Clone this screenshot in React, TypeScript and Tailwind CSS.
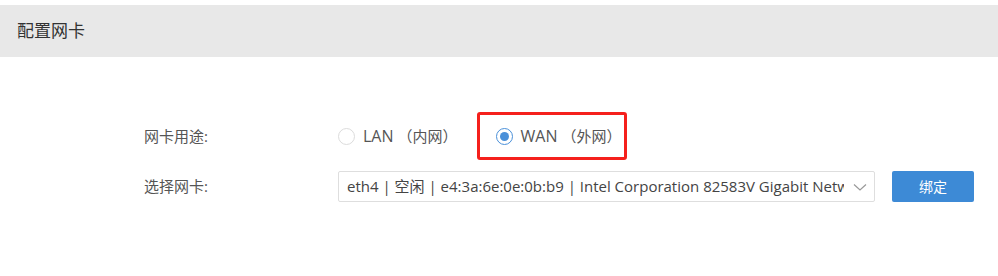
import React, { useState } from 'react';

const font = { fontFamily: '"Open Sans", "Noto Sans CJK SC", sans-serif' };

const Radio: React.FC<{ checked: boolean; label: string; sub: string; onClick: () => void }> = ({
  checked,
  label,
  sub,
  onClick,
}) => (
  <button type="button" onClick={onClick} className="flex items-center text-[16px] text-[#555]">
    <span
      className={
        checked
          ? 'w-[17px] h-[17px] rounded-full border border-[#4a90d9] flex items-center justify-center'
          : 'w-[17px] h-[17px] rounded-full border border-[#dcdcdc]'
      }
    >
      {checked && <span className="w-[9px] h-[9px] rounded-full bg-[#4a90d9]" />}
    </span>
    <span className="ml-[8px]">{label}</span>
    <span className="ml-[4px] text-[15px]">（{sub}）</span>
  </button>
);

export default function App() {
  const [usage, setUsage] = useState<'lan' | 'wan'>('wan');

  return (
    <div className="w-[998px] h-[276px] bg-white" style={font}>
      <div className="mt-[5px] h-[52px] bg-[#e8e8e8] flex items-center pl-[17px]">
        <h1 className="text-[17px] text-[#333]">配置网卡</h1>
      </div>

      <div className="pl-[144px] pt-[55px]">
        <div className="flex items-center h-[48px]">
          <div className="w-[194px] text-[15px] text-[#555]">网卡用途:</div>
          <Radio checked={usage === 'lan'} label="LAN" sub="内网" onClick={() => setUsage('lan')} />
          <div className="ml-[19px] h-[48px] w-[150px] border-[3px] border-[#f5201c] rounded-[3px] flex items-center pl-[16px]">
            <Radio checked={usage === 'wan'} label="WAN" sub="外网" onClick={() => setUsage('wan')} />
          </div>
        </div>

        <div className="flex items-center mt-[11px]">
          <div className="w-[194px] text-[15px] text-[#555]">选择网卡:</div>
          <div className="w-[537px] h-[31px] border border-[#dedede] rounded-[2px] flex items-center pl-[8px] pr-[6px]">
            <div className="flex-1 overflow-hidden whitespace-nowrap text-[15px] text-[#444]">
              eth4 | 空闲 | e4:3a:6e:0e:0b:b9 | Intel Corporation 82583V Gigabit Network Connection
            </div>
            <svg width="16" height="16" viewBox="0 0 16 16" className="ml-[8px] shrink-0">
              <path d="M2 5.5 L8 11 L14 5.5" fill="none" stroke="#999" strokeWidth="1.2" />
            </svg>
          </div>
          <button
            type="button"
            className="ml-[17px] w-[82px] h-[31px] rounded-[2px] bg-[#3d8ad6] text-white text-[14px]"
          >
            绑定
          </button>
        </div>
      </div>
    </div>
  );
}
